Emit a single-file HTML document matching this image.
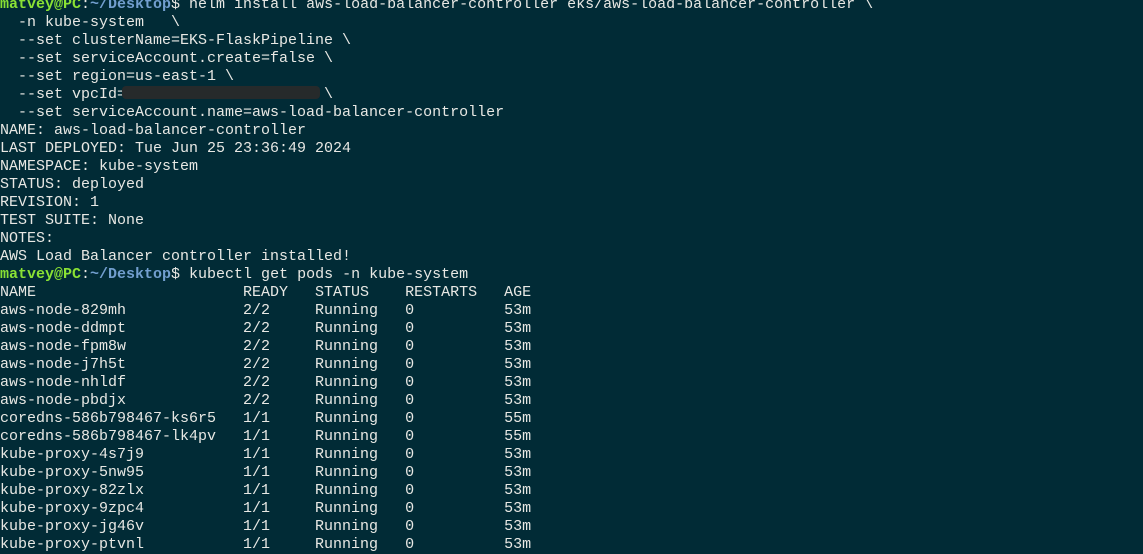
<!DOCTYPE html>
<html><head><meta charset="utf-8"><style>
html,body{margin:0;padding:0;background:#012b36;width:1143px;height:550px;overflow:hidden}
pre{margin:0;position:absolute;left:0;top:-4px;font-family:"Liberation Mono",monospace;font-size:15px;line-height:18px;color:#e8e8e4;white-space:pre}
.g{color:#8ae234;font-weight:bold}.b{color:#729fcf;font-weight:bold}
.r{position:absolute;left:122px;top:86px;width:198px;height:13px;background:#262a2b;border-radius:4px}
</style></head><body>
<pre><span class="g">matvey@PC</span>:<span class="b">~/Desktop</span>$ helm install aws-load-balancer-controller eks/aws-load-balancer-controller \
  -n kube-system   \
  --set clusterName=EKS-FlaskPipeline \
  --set serviceAccount.create=false \
  --set region=us-east-1 \
  --set vpcId=                      \
  --set serviceAccount.name=aws-load-balancer-controller
NAME: aws-load-balancer-controller
LAST DEPLOYED: Tue Jun 25 23:36:49 2024
NAMESPACE: kube-system
STATUS: deployed
REVISION: 1
TEST SUITE: None
NOTES:
AWS Load Balancer controller installed!
<span class="g">matvey@PC</span>:<span class="b">~/Desktop</span>$ kubectl get pods -n kube-system
NAME                       READY   STATUS    RESTARTS   AGE
aws-node-829mh             2/2     Running   0          53m
aws-node-ddmpt             2/2     Running   0          53m
aws-node-fpm8w             2/2     Running   0          53m
aws-node-j7h5t             2/2     Running   0          53m
aws-node-nhldf             2/2     Running   0          53m
aws-node-pbdjx             2/2     Running   0          53m
coredns-586b798467-ks6r5   1/1     Running   0          55m
coredns-586b798467-lk4pv   1/1     Running   0          55m
kube-proxy-4s7j9           1/1     Running   0          53m
kube-proxy-5nw95           1/1     Running   0          53m
kube-proxy-82zlx           1/1     Running   0          53m
kube-proxy-9zpc4           1/1     Running   0          53m
kube-proxy-jg46v           1/1     Running   0          53m
kube-proxy-ptvnl           1/1     Running   0          53m</pre>
<div class="r"></div>
</body></html>
